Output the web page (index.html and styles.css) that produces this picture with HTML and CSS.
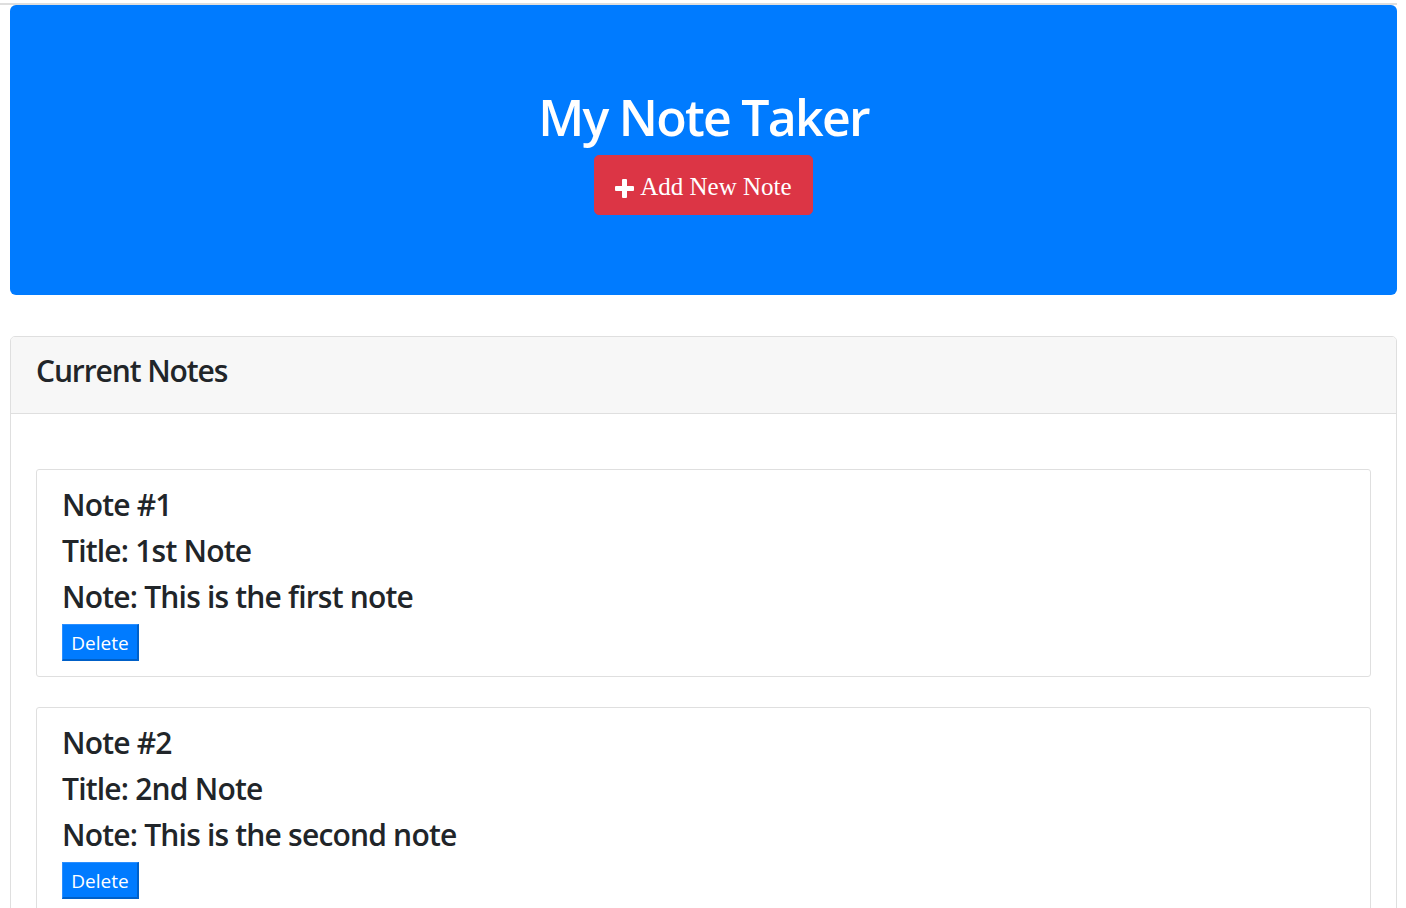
FILE: index.html
```html
<!DOCTYPE html>
<html lang="en">
<head>
<meta charset="utf-8">
<title>My Note Taker</title>
<link rel="stylesheet" href="styles.css">
</head>
<body>
<div class="topline"></div>
<main class="page">
  <header class="jumbotron">
    <h1 class="title">My Note Taker</h1>
    <button class="add-btn" type="button"><svg class="plus" width="19" height="19" viewBox="0 0 19 19" aria-hidden="true"><rect x="7" y="0" width="5" height="19" rx="1" fill="#fff"/><rect x="0" y="7" width="19" height="5" rx="1" fill="#fff"/></svg> Add New Note</button>
  </header>

  <section class="card">
    <div class="card-header">
      <h4 class="card-title">Current Notes</h4>
    </div>
    <div class="card-body">
      <article class="note">
        <h4 class="note-line">Note #1</h4>
        <h4 class="note-line">Title: 1st Note</h4>
        <h4 class="note-line">Note: This is the first note</h4>
        <button class="del-btn" type="button">Delete</button>
      </article>
      <article class="note">
        <h4 class="note-line">Note #2</h4>
        <h4 class="note-line">Title: 2nd Note</h4>
        <h4 class="note-line">Note: This is the second note</h4>
        <button class="del-btn" type="button">Delete</button>
      </article>
    </div>
  </section>
</main>
</body>
</html>
```
FILE: styles.css
```css
* { box-sizing: border-box; }

html, body {
  margin: 0;
  padding: 0;
  background: #fff;
}

body {
  padding-top: 3px;
  font-family: "Open Sans", "Noto Sans", sans-serif;
  color: #212529;
}

.topline {
  height: 2px;
  background: #dedede;
  margin-right: 9px;
}

.page {
  padding: 0 9px 0 10px;
}

.jumbotron {
  height: 290px;
  background: #007bff;
  border-radius: 6px;
  text-align: center;
  padding-top: 82px;
}

.title {
  margin: 0 0 8px;
  font-size: 50px;
  line-height: 60px;
  font-weight: 550;
  color: #fff;
  letter-spacing: -1.75px;
}

.add-btn {
  display: inline-block;
  padding: 12px 20px 9px;
  border: 1px solid #dc3545;
  border-radius: 5px;
  background: #dc3545;
  color: #fff;
  font-family: "Liberation Serif", "Times New Roman", serif;
  font-size: 25px;
  line-height: 37px;
  cursor: pointer;
}

.plus {
  vertical-align: -3px;
  margin-right: 1px;
}

.card {
  margin-top: 41px;
  border: 1px solid #dfdfdf;
  border-radius: 5px;
  overflow: hidden;
}

.card-header {
  background: #f7f7f7;
  border-bottom: 1px solid #dfdfdf;
  padding: 16px 25px 14px;
}

.card-title {
  margin: 0 0 10px;
  font-size: 30px;
  line-height: 36px;
  font-weight: 550;
  letter-spacing: -1.1px;
}

.card-body {
  padding: 25px 25px 0;
  display: flex;
  flex-direction: column;
  gap: 30px;
}

.card-body .note:first-child {
  margin-top: 30px;
}

.note {
  border: 1px solid #dfdfdf;
  border-radius: 3px;
  padding: 17px 25px 15px;
  display: flex;
  flex-direction: column;
  align-items: flex-start;
}

.note-line {
  margin: 0 0 10px;
  font-size: 30px;
  line-height: 36px;
  font-weight: 550;
  letter-spacing: -0.8px;
}

.note-line:nth-last-of-type(1) {
  margin-bottom: 9px;
}

.del-btn {
  width: 77px;
  height: 37px;
  padding: 6px 0 4px;
  background: #007bff;
  color: #fff;
  font-family: "Open Sans", "Noto Sans", sans-serif;
  font-size: 19px;
  line-height: 24px;
  text-align: center;
  border-style: solid;
  border-width: 1px 2px 2px 1px;
  border-color: #2b8fff #0060c8 #0060c8 #2b8fff;
  cursor: pointer;
}
```
